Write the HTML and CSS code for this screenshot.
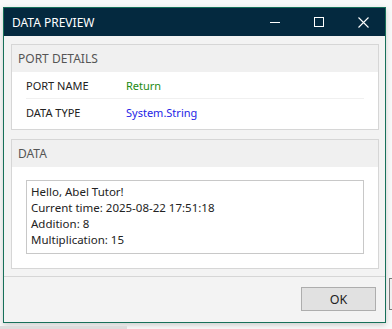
FILE: index.html
```html
<!DOCTYPE html>
<html lang="en">

<head>
  <meta charset="UTF-8">
  <meta name="viewport" content="width=device-width, initial-scale=1.0">
  <title>Data Preview</title>
  <link rel="stylesheet" href="styles.css">
</head>

<body>
  <div class="window">
    <div class="titlebar">
      <span class="title">DATA PREVIEW</span>
      <div class="controls">
        <span class="ctl">
          <svg width="10" height="10" viewBox="0 0 10 10"><path d="M0 5.5h10" stroke="#fff" stroke-width="1"/></svg>
        </span>
        <span class="ctl">
          <svg width="10" height="10" viewBox="0 0 10 10"><rect x="0.5" y="0.5" width="9" height="9" fill="none" stroke="#fff" stroke-width="1"/></svg>
        </span>
        <span class="ctl">
          <svg width="11" height="11" viewBox="0 0 11 11"><path d="M0.5 0.5l10 10M10.5 0.5l-10 10" stroke="#fff" stroke-width="1.1"/></svg>
        </span>
      </div>
    </div>

    <div class="content">
      <div class="group">
        <div class="group-head">PORT DETAILS</div>
        <div class="group-body">
          <div class="row">
            <span class="label">PORT NAME</span>
            <span class="value green">Return</span>
          </div>
          <div class="row last">
            <span class="label">DATA TYPE</span>
            <span class="value blue">System.String</span>
          </div>
        </div>
      </div>

      <div class="group data">
        <div class="group-head">DATA</div>
        <div class="group-body">
          <div class="textbox">
            <div>Hello, Abel Tutor!</div>
            <div>Current time: 2025-08-22 17:51:18</div>
            <div>Addition: 8</div>
            <div>Multiplication: 15</div>
          </div>
        </div>
      </div>
    </div>

    <div class="footer">
      <button class="ok">OK</button>
    </div>
  </div>

  <div class="behind"></div>
  <div class="strip"></div>
</body>

</html>
```

FILE: styles.css
```css
* {
  margin: 0;
  padding: 0;
  box-sizing: border-box;
}

body {
  background-color: #f9f9f9;
  font-family: "Noto Sans", "Open Sans", sans-serif;
  overflow: hidden;
  width: 392px;
  height: 329px;
}

.window {
  margin: 7px 0 0 3px;
  width: 383px;
  height: 316px;
  border: 1px solid #17705a;
  background-color: #f3f3f3;
  box-shadow: 0 2px 6px rgba(0, 0, 0, 0.18);
}

.titlebar {
  height: 28px;
  background-color: #04293f;
  display: flex;
  align-items: center;
  justify-content: space-between;
  padding-left: 8px;
}

.title {
  color: #fff;
  font-size: 12px;
}

.controls {
  display: flex;
  height: 100%;
}

.ctl {
  width: 44px;
  height: 100%;
  display: flex;
  align-items: center;
  justify-content: center;
}

.ctl svg {
  display: block;
}

.content {
  height: 240px;
  padding: 8px 6px 0 7px;
}

.group {
  border: 1px solid #d6d6d6;
  background-color: #fff;
  height: 86px;
}

.group.data {
  height: 130px;
  margin-top: 9px;
}

.group-head {
  height: 27px;
  background-color: #f0f0f0;
  color: #555;
  font-size: 12px;
  line-height: 27px;
  padding-left: 6px;
}

.row {
  display: flex;
  align-items: center;
  height: 27px;
  margin: 0 14px;
  border-bottom: 1px solid #f0f0f0;
  font-size: 11px;
  color: #222;
}

.row.last {
  border-bottom: none;
}

.label {
  width: 100px;
}

.green {
  color: #1c8a12;
}

.blue {
  color: #2424e6;
}

.group.data .group-body {
  padding: 13px 14px 0 14px;
}

.textbox {
  height: 74px;
  border: 1px solid #c8c8c8;
  padding: 3px 4px 0 4px;
  font-size: 11.5px;
  line-height: 16px;
  color: #222;
}

.footer {
  height: 46px;
  border-top: 1px solid #d6d6d6;
  display: flex;
  justify-content: flex-end;
  padding: 10px 9px 0 0;
}

.ok {
  width: 75px;
  height: 24px;
  background-color: #e1e1e1;
  border: 1px solid #adadad;
  font-family: "Noto Sans", "Open Sans", sans-serif;
  font-size: 12.5px;
  color: #222;
}

.behind {
  position: absolute;
  left: 389px;
  top: 278px;
  width: 10px;
  height: 32px;
  border: 1px solid #7a7a7a;
  background-color: #f0f0f0;
}

.strip {
  position: absolute;
  left: 0;
  top: 326px;
  width: 127px;
  height: 3px;
  background-color: #dcdcdc;
}
```
